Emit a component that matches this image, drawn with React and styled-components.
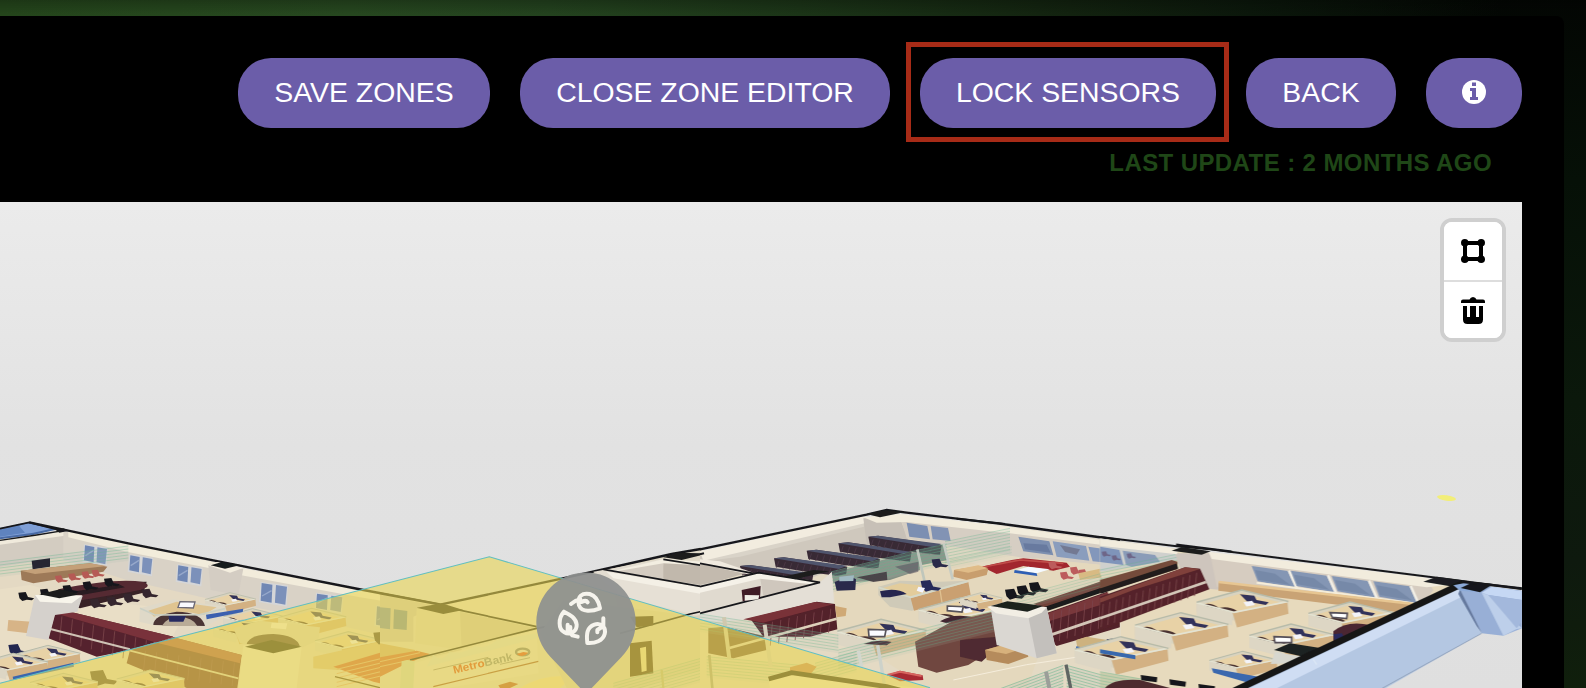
import React from 'react';
import styled, { createGlobalStyle } from 'styled-components';

const GlobalStyle = createGlobalStyle`
  * { box-sizing: border-box; }
  body { margin: 0; background: #050a05; font-family: "Liberation Sans", Arial, sans-serif; overflow: hidden; }
`;

const Page = styled.div`
  height: 688px;
  padding: 16px 22px 0 0;
  background:
    linear-gradient(180deg, rgba(0,0,0,.22), rgba(0,0,0,0) 14px),
    linear-gradient(90deg, #24451b 0, #26471f 350px, #23421e 550px, #1b3417 800px, #12220f 1070px, #0b170b 1250px, rgba(6,12,6,0) 1500px),
    linear-gradient(180deg, #030603 0, #061007 180px, #0b180b 400px, #0e190e 560px, #101f0c 688px);
`;

const Panel = styled.main`
  height: 672px;
  padding: 42px 42px 0 0;
  display: flex;
  flex-direction: column;
  background: #000;
  border-top-right-radius: 8px;
`;

const Actions = styled.nav`
  display: flex;
  justify-content: flex-end;
  gap: 30px;
`;

const Highlighted = styled.div`
  position: relative;
  &::after {
    content: "";
    position: absolute;
    inset: -16px -13px -14px -14px;
    border: 5px solid #a72b17;
    pointer-events: none;
  }
`;

const PillButton = styled.button`
  display: flex;
  align-items: center;
  justify-content: center;
  width: ${(p) => p.$width}px;
  height: 70px;
  padding: 0 0 2px;
  border: 0;
  border-radius: 33px;
  background: #6b5da9;
  color: #fff;
  font: 400 28.4px/32px "Liberation Sans", Arial, sans-serif;
  white-space: nowrap;
`;

const LastUpdate = styled.p`
  margin: 20px 30px 0 0;
  height: 54px;
  text-align: right;
  color: #1f4717;
  font-size: 24px;
  font-weight: 700;
  line-height: 30px;
  letter-spacing: 0.41px;
`;

const MapArea = styled.section`
  position: relative;
  height: 486px;
  overflow: hidden;
  background: linear-gradient(180deg, #ebebeb, #e2e2e2 50%, #dfdfdf);
`;

const Scene = styled.svg`
  display: block;
  width: 1522px;
  height: 486px;
`;

const MapTools = styled.div`
  position: absolute;
  top: 16px;
  right: 16px;
  width: 66px;
  border: 4px solid #cfcfcf;
  border-radius: 12px;
  overflow: hidden;
  background: #fff;
`;

const ToolButton = styled.button`
  display: flex;
  align-items: center;
  justify-content: center;
  width: 58px;
  height: ${(p) => (p.$divided ? 60 : 56)}px;
  padding: 0;
  border: 0;
  border-bottom: ${(p) => (p.$divided ? '2px solid #ddd' : '0')};
  background: #fff;
`;

const InfoIcon = () => (
  <svg width="24" height="24" viewBox="0 0 24 24">
    <circle cx="12" cy="12" r="12" fill="#fff" />
    <path d="M10 2.500H14V6H10ZM8 8H14V17H16V20H8V17H10V11H8Z" fill="#6b5da9" />
  </svg>
);

const DrawZoneIcon = () => (
  <svg width="24" height="24" viewBox="0 0 24 24">
    <rect x="4" y="4" width="16" height="16" rx="3" fill="none" stroke="#000" strokeWidth="4" />
    {[[3.8, 3.8], [20.2, 3.8], [3.8, 20.2], [20.2, 20.2]].map(([x, y]) => (
      <circle key={`${x}-${y}`} cx={x} cy={y} r="3.8" />
    ))}
  </svg>
);

const TrashIcon = () => (
  <svg width="24" height="27" viewBox="0 0 24 27">
    <path d="M0 6V4.500Q0 2.500 2 2.500H8.500Q9.500 0 12 0T15.500 2.500H22Q24 2.500 24 4.500V6Z" />
    <path d="M2 9H6V20H9V9H15V20H18V9H22V22.500Q22 27 17.500 27H6.500Q2 27 2 22.500Z" />
  </svg>
);

const Poly = ({ p, f, o, s, w }) => <polygon points={p} fill={f || 'none'} opacity={o} stroke={s} strokeWidth={w} />;
const Line = ({ p, c = '#17181a', w = 6, o }) => <polyline points={p} fill="none" stroke={c} strokeWidth={w} opacity={o} />;

/* A part of the plan drawn on a grid three times finer than the screen. */
const Sector = ({ x, y, children }) => <g transform={`translate(${x} ${y}) scale(.33333)`}>{children}</g>;

const Desk = ({ x, y, s = 1, front = '#d3b183' }) => (
  <g transform={`translate(${x} ${y}) scale(${s})`}>
    <Poly p="0,34 125,0 255,32 250,58 130,90 0,62" f="#d9d3bf" />
    <Poly p="22,38 125,9 232,34 130,66" f="#e8d2a6" />
    <path d="M20 40Q40 34 62 50Q90 44 112 58L92 64Q50 60 28 50Z" fill="#4a3330" />
    <path d="M120 12L160 16 166 28 200 34 192 42 140 32Z" fill="#33325a" />
    <path d="M130 34L154 30 162 42 138 46Z" fill="#f3f3f8" />
    <Poly p="0,38 100,62 98,98 0,72" f="#ddd6c4" />
    <Poly p="100,64 252,34 255,66 112,104" f={front} />
    <Line p="0,36 104,62 252,32" c="#e4e3d2" w={5} />
    <Line p="0,34 125,0 255,32" c="#b7bbaa" w={4} />
  </g>
);

const Blinds = ({ x1, y1, x2, y2, n, step = 9, o = 0.55 }) => (
  <g opacity={o}>
    <Poly p={`${x1},${y1} ${x2},${y2} ${x2},${y2 + n * step} ${x1},${y1 + n * step}`} f="#a9bdae" o={0.3} />
    {Array.from({ length: n }, (_, i) => (
      <Line key={i} p={`${x1},${y1 + i * step} ${x2},${y2 + i * step}`} c="#6bb592" w={2.2} />
    ))}
  </g>
);

const Seams = ({ from, to, h, n, c = '#7b444b' }) => (
  <g>
    {Array.from({ length: n }, (_, i) => {
      const t = (i + 0.5) / n;
      const x = from[0] + (to[0] - from[0]) * t;
      const y = from[1] + (to[1] - from[1]) * t;
      return <Line key={i} p={`${x},${y} ${x - 7},${y + h}`} c={c} w={2.5} />;
    })}
  </g>
);

const WindowPair = ({ x, y, w = 72, h = 52 }) => (
  <g>
    <Poly p={`${x},${y} ${x + w},${y + 10} ${x + w - 4},${y + h + 14} ${x - 5},${y + h}`} f="#d5d6d8" />
    <Poly p={`${x + 3},${y + 3} ${x + w * 0.43},${y + 8} ${x + w * 0.4},${y + h + 2} ${x},${y + h - 4}`} f="#7087b4" />
    <Poly p={`${x + w * 0.56},${y + 9} ${x + w - 3},${y + 14} ${x + w - 8},${y + h + 8} ${x + w * 0.52},${y + h + 2}`} f="#7c91ba" />
    <Line p={`${x + 4},${y + h - 18} ${x + w * 0.4},${y + h - 34}`} c="#97a9cb" w={4} />
  </g>
);

const Chair = ({ x, y, s = 1, c = '#19181d' }) => (
  <path transform={`translate(${x} ${y}) scale(${s})`} d="M0 3L26 0 34 18 56 22 48 29 30 27 14 32 4 22Z" fill={c} />
);

const WestWing = () => (
  <Sector x={0} y={500}>
    <Poly p="0,190 190,165 380,205 600,260 880,335 1300,430 1300,564 0,564" f="#e4d9c3" />
    <Poly p="0,85 88,66 175,88 100,105 0,122" f="#4a6ba5" />
    <Poly p="0,92 82,70 155,86 100,98 0,112" f="#7f9fd6" />
    <Poly p="0,84 55,75 75,98 0,110" f="#5f83bf" />
    <Poly p="0,120 190,95 205,145 190,172 0,200" f="#d3ccc1" />
    <Poly p="0,118 190,94 205,106 0,134" f="#f0eadc" />
    <Poly p="190,94 385,130 660,190 725,205 1100,272 1300,305 1300,440 880,345 600,290 380,240 190,180" f="#d9d2c6" />
    <Poly p="205,92 385,130 650,188 630,205 380,155 205,112" f="#f2ecdb" />
    <Poly p="720,203 1090,272 1300,310 1300,328 1080,292 720,225" f="#f2ecdb" />
    <Line p="0,86 88,67 175,90" w={5} />
    <Line p="0,121 110,105 190,92" w={4} />
    <Line p="88,67 385,130 670,187 1090,270 1320,313" w={7} />
    <Poly p="165,88 190,85 208,92 178,98" f="#17181a" />
    <WindowPair x={252} y={133} />
    <WindowPair x={388} y={163} />
    <WindowPair x={532} y={193} w={76} />
    <WindowPair x={782} y={246} w={82} h={60} />
    <WindowPair x={948} y={278} w={82} h={50} />
    <WindowPair x={1128} y={316} w={90} h={62} />
    <Poly p="625,196 650,186 730,206 715,285 632,270" f="#d4cdc3" />
    <Poly p="625,196 650,186 730,204 690,218" f="#f4eedf" />
    <Poly p="632,196 668,185 722,195 675,206" f="#191a1b" />
    <Blinds x1={0} y1={186} x2={385} y2={138} n={5} o={0.55} />
    <Poly p="95,182 150,175 150,200 98,208" f="#272631" />
    <Poly p="62,212 270,190 322,200 310,215 100,250 65,240" f="#9d7958" />
    <Poly p="62,212 270,190 320,198 105,222" f="#c4a079" />
    {[[165, 226], [205, 220], [245, 214], [275, 209]].map(([x, y]) => <Chair key={x} x={x} y={y} s={0.7} c="#b65a55" />)}
    <Poly p="0,268 90,255 260,300 560,330 515,415 0,550" f="#e9dec6" />
    <Poly p="180,268 340,246 440,245 430,278 240,325 190,310" f="#372027" />
    <path d="M175 268Q350 232 430 246Q470 262 390 276L235 302 175 282Z" fill="#542b33" />
    <Poly p="215,275 360,254 375,262 245,285" f="#2b1b20" />
    {[[55, 276], [120, 266], [188, 255], [248, 244], [312, 234]].map(([x, y]) => <Chair key={x} x={x} y={y} s={0.85} />)}
    {[[270, 296], [320, 290], [370, 280], [425, 266]].map(([x, y]) => <Chair key={x} x={x} y={y} s={0.9} c="#35272d" />)}
    <Poly p="25,360 95,365 85,400 22,392" f="#d7b487" />
    <Poly p="165,340 210,335 520,410 390,450 290,470 145,415" f="#55232d" />
    <Poly p="165,340 210,335 520,410 470,428" f="#79323a" />
    <Seams from={[170, 345]} to={[455, 425]} h={72} n={9} />
    <Line p="148,386 390,448" c="#cfc2b5" w={6} />
    <Poly p="105,285 248,288 232,335 165,345 145,420 78,408" f="#d5d1cc" />
    <Poly p="105,285 248,286 215,310 120,305" f="#f8f5eb" />
    <Poly p="118,283 180,268 240,283 178,295" f="#1b1e1d" />
    <Desk x={615} y={278} s={0.6} />
    <Desk x={670} y={326} s={0.7} />
    <Poly p="420,325 520,298 675,320 670,350 615,380 460,375 418,365" f="#dfd9c8" />
    <path d="M445 332L530 305 650 322 610 345Q535 325 462 350Z" fill="#dfc490" />
    <path d="M460 375Q460 345 530 335Q605 336 615 378Z" fill="#4b3435" />
    <path d="M485 378Q500 352 535 350Q580 352 592 378Z" fill="#b9ab97" />
    <Poly p="505,345 558,348 550,365 508,365" f="#272c61" />
    <Poly p="540,305 585,306 580,324 534,322" f="#fafaff" s="#6c6975" w={4} />
    <Line p="420,325 465,345 600,344 675,326" c="#cbd0c4" w={5} />
    <Poly p="618,344 730,326 728,336 620,358" f="#3a61af" />
    <Chair x={25} y={432} s={1.1} c="#24264f" />
    <Desk x={50} y={436} s={0.75} />
    <Desk x={-60} y={460} s={0.8} />
    <Poly p="38,530 220,488 222,500 40,540" f="#3b66ad" />
    {/* furniture inside the zone */}
    <Poly p="390,450 520,412 725,465 712,564 560,564 380,490" f="#6d3034" />
    <Poly p="470,428 520,412 725,465 720,490" f="#a8564c" />
    <Seams from={[420, 450]} to={[720, 490]} h={70} n={9} />
    <Line p="390,452 715,535" c="#d8cfb8" w={5} />
    <Desk x={640} y={360} s={0.7} />
    <Desk x={835} y={325} s={0.8} />
    <Poly p="700,385 780,362 960,382 955,420 880,455 720,430" f="#dbd4bd" />
    <path d="M740 432Q750 402 820 402Q890 405 900 440Z" fill="#54453c" />
    <Poly p="815,368 862,370 858,388 812,384" f="#f6efe2" />
    <Poly p="730,436 905,440 890,564 715,564" f="#ece5d0" />
    <Poly p="735,440 815,420 905,440 820,460" f="#2a2a1e" />
    <Desk x={945} y={395} s={0.8} />
    <Poly p="940,470 1200,412 1200,455 1015,510 940,505" f="#d9bd8c" />
    <Poly p="1000,500 1200,440 1200,564 1120,545" f="#d0643f" />
    {[0, 1, 2, 3, 4].map((i) => <Line key={i} p={`1010,${508 + i * 13} 1200,${462 + i * 13}`} c="#dfae85" w={3} />)}
    <Line p="1005,530 1200,578" c="#4d3a24" w={4} />
    <Chair x={270} y={510} s={1.5} c="#554737" />
    <Desk x={90} y={520} s={0.8} />
    <Desk x={350} y={510} s={0.8} />
    <Chair x={1120} y={395} s={1.2} c="#4f4234" />
  </Sector>
);

const CentralRooms = () => (
  <Sector x={380} y={500}>
    <Poly p="0,280 180,315 545,235 830,175 960,150 1200,200 1200,420 1100,564 0,564" f="#e2dac8" />
    <Poly p="0,284 170,318 100,350 100,425 0,425" f="#cdc6b8" />
    <Poly p="0,322 32,325 30,388 0,384" f="#7790ae" />
    <Poly p="42,328 82,333 80,390 40,386" f="#7289a4" />
    <Poly p="0,430 105,450 105,480 0,500" f="#cfac7a" />
    <Poly p="0,472 110,452 150,462 60,500 0,530" f="#d0643f" />
    <Line p="0,485 120,458" c="#dfae85" w={3} />
    <Line p="0,500 100,478" c="#dfae85" w={3} />
    <Poly p="110,326 245,335 245,450 105,430" f="#ddd4bf" />
    <Poly p="240,335 470,385 110,480 245,450" f="#cfc6b2" />
    <Poly p="185,310 545,237 700,270 720,350 470,382 250,330" f="#e8dfca" />
    <Line p="0,280 180,314 545,236 875,162 962,147" w={7} />
    <Line p="190,320 470,380" w={5} />
    <Poly p="110,323 185,310 250,330 190,342" f="#22221d" />
    <Poly p="100,490 470,390 475,520 200,564 60,564" f="#e6dfcf" />
    <Line p="90,480 470,385 720,340" w={5} />
    <path d="M160 464Q185 490 210 455Q245 465 285 438Q320 448 350 420L470 400 472 415 140 500Z" fill="#d7e0d7" opacity=".6" />
    <text transform="translate(222 521) rotate(-13)" fontFamily="Liberation Sans, Arial, sans-serif" fontSize="33" fontWeight="700" textLength="182" lengthAdjust="spacingAndGlyphs">
      <tspan fill="#d8451c">Metro</tspan><tspan fill="#858a85">Bank</tspan>
    </text>
    <ellipse cx="428" cy="456" rx="20" ry="10" fill="none" stroke="#787c7a" strokeWidth="7" />
    <path d="M410 462Q428 475 445 458L430 456Z" fill="#df4a20" />
    <Line p="160,510 325,472" c="#8a8275" w={2.5} />
    <Line p="160,560 475,484" c="#99502f" w={3.5} />
    <Line p="360,493 450,473" c="#98948a" w={3} />
    <Poly p="355,556 390,545 415,552 390,564 360,564" f="#b7512f" />
    <path d="M420 564Q490 520 580 530L540 564Z" fill="#f0dca9" />
    <Poly p="65,484 82,480 104,484 100,564 60,564" f="#cfd8bf" />

    <Poly p="640,215 700,205 860,175 985,190 1200,222 1200,290 950,345 720,290" f="#e3ddd1" />
    <Poly p="690,215 850,178 980,185 1105,215 965,258" f="#f3eee1" />
    <Poly p="715,213 850,190 860,235 835,238" f="#d4ccc1" />
    <Poly p="850,190 985,197 1090,222 965,256 850,238" f="#c1b8ac" />
    <Poly p="680,215 965,260 1140,222 1200,230 1200,285 950,345 720,290" f="#e6e0d5" />
    <Poly p="680,215 965,262 1140,224 1140,240 965,282 700,235" f="#f4f0e6" />
    <Line p="670,208 965,260 1130,222 850,178" w={5} />
    <Poly p="850,172 890,158 962,160 975,163 905,180" f="#1b1c1d" />

    <Poly p="550,300 950,348 1200,290 1200,415 1070,490 900,525 780,564 560,564 480,400" f="#dad2bc" />
    <Line p="720,400 930,342 1200,282" w={5} />
    <Poly p="750,350 820,348 820,376 770,382" f="#312820" />
    <Poly p="750,430 815,422 820,520 750,530" f="#453022" />
    <Poly p="780,444 798,440 800,512 785,516" f="#e8dba6" />
    <Blinds x1={700} y1={550} x2={980} y2={470} n={8} />
    <Line p="845,510 850,564" c="#b9b98f" w={7} />
  </Sector>
);

const EastWing = () => (
  <Sector x={700} y={490}>
    <Poly p="0,195 500,82 600,75 930,110 1260,155 1260,594 0,594" f="#e4dac4" />
    <Poly p="0,198 495,88 500,170 420,195 395,240 340,262 120,236 0,216" f="#cfc8bd" />
    <Poly p="12,196 490,92 492,110 120,200 12,214" f="#d9d3c8" />
    <Poly p="0,184 490,78 510,96 10,212" f="#f2ecdf" />
    <Poly p="490,85 600,85 625,150 500,165" f="#c7c0b7" />
    <Poly p="600,78 930,115 1260,165 1260,230 980,205 750,168 620,145" f="#d6cec3" />
    <Poly p="600,72 925,110 1260,158 1260,172 930,130 620,96 530,98 490,82" f="#f2ecdc" />
    <Line p="0,178 500,74 560,60 620,68 930,105 1260,150" w={7} />
    <Line p="0,193 12,190" w={6} />
    <Poly p="498,72 558,60 612,67 540,82" f="#1b1e1e" />
    <Line p="770,86 915,102" w={6} />
    <Poly p="620,98 682,108 690,148 628,140" f="#7c8fb2" />
    <Poly p="692,108 744,114 752,153 698,148" f="#8293b4" />
    <Poly p="955,140 1048,154 1060,196 970,184" f="#7b8eaf" />
    <Poly p="1058,154 1158,168 1168,212 1070,200" f="#8a9dbd" />
    <Poly p="1165,170 1260,184 1260,222 1178,214" f="#8397bb" />
    <Poly p="970,160 1040,164 1052,188 975,178" f="#677a9f" />
    <Poly p="1080,165 1140,178 1130,194 1095,186" f="#737992" />
    {[[120, 228], [222, 205], [320, 182], [415, 160], [505, 140]].map(([x, y]) => (
      <g key={x}>
        <Poly p={`${x},${y} ${x + 30},${y - 3} ${x + 220},${y + 25} ${x + 215},${y + 55} ${x + 105},${y + 42} ${x + 5},${y + 25}`} f="#392936" />
        <Poly p={`${x},${y} ${x + 28},${y - 3} ${x + 220},${y + 22} ${x + 195},${y + 32}`} f="#50546d" />
        <Seams from={[x + 5, y + 7]} to={[x + 200, y + 34]} h={20} n={10} c="#4c3a47" />
      </g>
    ))}
    <Poly p="400,260 600,220 770,205 860,230 1010,205 1260,230 1260,400 1030,460 980,594 680,594 410,420" f="#e4d8bd" />
    <Blinds x1={735} y1={155} x2={930} y2={115} n={8} o={0.5} />
    <Blinds x1={750} y1={210} x2={935} y2={170} n={3} o={0.3} />
    <Poly p="845,230 935,210 970,205 1100,218 1110,230 1060,242 970,228 890,252" f="#a2282f" />
    <Line p="850,231 960,210 1090,220" c="#c04c4a" w={5} />
    <Poly p="950,240 985,230 1050,238 1010,250" f="#f5faff" />
    <Poly p="944,240 1010,250 1012,258 942,248" f="#2e5fb5" />
    <Poly p="762,240 835,228 865,236 860,255 800,270 760,260" f="#c89e6e" />
    <Poly p="762,240 835,226 864,234 805,248" f="#e0bc88" />
    {[[1080, 245], [1110, 230], [1135, 238], [1045, 214]].map(([x, y]) => <Chair key={x} x={x} y={y} s={0.75} c="#bc5c5c" />)}
    <Poly p="395,248 655,182 660,240 570,270 400,280" f="#435f5b" o={0.6} />
    <Poly p="655,180 735,162 745,210 665,225" f="#435c59" o={0.6} />
    <Blinds x1={392} y1={246} x2={655} y2={180} n={7} o={0.6} />
    <Blinds x1={655} y1={180} x2={740} y2={162} n={7} o={0.6} />
    <Poly p="470,262 560,245 562,270 520,276" f="#3b303a" o={0.8} />
    <Poly p="585,230 655,215 655,245 630,252" f="#5c5460" o={0.6} />
    <Line p="652,178 675,280" c="#bfc6bb" w={8} />
    <Line p="731,160 758,268" c="#c5cbc2" w={8} />
    <Poly p="404,276 450,258 468,268 466,300 410,302" f="#292c4c" />
    <Poly p="418,260 462,256 460,273 418,274" f="#9fb8c1" />
    <Chair x={695} y={206} s={0.9} c="#2c294a" />
    <Poly p="535,290 600,272 720,275 800,272 808,315 635,362 570,350 535,315" f="#cfcab8" />
    <Poly p="545,295 600,280 715,292 630,322" f="#e3cc9b" />
    <Poly p="632,325 805,276 812,314 642,362" f="#caa071" />
    <Line p="720,300 726,338" c="#dfc090" w={4} />
    <Line p="535,292 632,322 803,274" c="#d5d8c8" w={6} />
    <path d="M540 304Q590 292 620 312L570 322 545 322Z" fill="#27264f" />
    <Chair x={662} y={270} s={1.1} c="#26295a" />
    <Poly p="655,290 675,294 668,308 650,302" f="#f3f4ff" />
    <Desk x={656} y={324} s={1} />
    <Desk x={780} y={308} s={0.5} />
    <Desk x={412} y={388} s={1.05} />
    <Poly p="742,348 790,350 786,366 742,362" f="#fbfbff" s="#57535a" w={5} />
    <Poly p="505,418 558,420 554,440 507,440" f="#fbfbff" s="#57535a" w={5} />
    <path d="M720 394Q760 368 820 382L740 400Z" fill="#422831" />
    <path d="M490 462Q530 446 575 456L560 466Z" fill="#422831" />
    <Poly p="645,455 755,395 880,365 900,465 805,525 710,548 655,530" f="#70463f" />
    <Poly p="780,450 892,440 900,465 845,515 780,500" f="#4f2c30" />
    <Blinds x1={415} y1={480} x2={885} y2={362} n={7} o={0.5} />
    <Line p="880,358 900,465" c="#a9c2b3" w={5} />
    <Poly p="855,480 920,462 980,472 985,500 925,522 860,510" f="#b58b5c" />
    <Poly p="855,480 920,462 980,472 918,492" f="#d7b17c" />
    {[[915, 296], [950, 286], [987, 276]].map(([x, y]) => <Chair key={x} x={x} y={y} s={1.05} />)}
    <Poly p="1135,250 1240,228 1260,234 1260,256 1140,270" f="#d8ba83" />
    <Poly p="1000,342 1260,255 1260,278 1040,355" f="#714239" />
    <Blinds x1={950} y1={320} x2={1260} y2={235} n={5} o={0.4} />
    <Line p="1035,358 1260,282" c="#1d1a1b" w={14} />
    <Poly p="1038,370 1260,292 1260,412 1070,468 1040,440" f="#532229" />
    <Poly p="1038,372 1260,294 1260,326 1040,396" f="#79373b" />
    <Seams from={[1050, 372]} to={[1260, 306]} h={92} n={9} />
    <Line p="1055,434 1260,364" c="#d3c5b7" w={9} />
    <Poly p="872,355 1040,352 1070,490 1010,505 890,465" f="#dad7d2" />
    <Poly p="982,365 1040,352 1070,490 1010,505" f="#c3c0bc" />
    <Poly p="862,350 920,336 1040,352 1025,368 985,385 888,370" f="#f2eee4" />
    <Poly p="872,348 922,334 1030,348 982,365" f="#1c201f" />
    <Poly p="1128,450 1160,440 1260,456 1260,520 1135,490" f="#cdb27f" />
    <Line p="1128,474 1260,500" c="#416db0" w={11} />
    <Chair x={1220} y={445} s={1} c="#222653" />
    <Poly p="0,220 145,247 0,290" f="#c3baae" />
    <Poly p="0,208 60,214 160,248 140,252 0,222" f="#f0eadf" />
    <Poly p="0,285 165,250 370,275 395,246 402,340 0,370" f="#e0dacf" />
    <Poly p="180,262 345,278 190,320 185,290" f="#cfc7bd" />
    <Poly p="0,290 180,250 345,275 335,283 180,266 0,308" f="#f5f1e8" />
    <Poly p="0,370 360,277 395,246 402,340 190,385 0,400" f="#e4dfd6" />
    <Line p="0,290 160,252 175,248 360,277 0,370" w={5} />
    <Line p="0,220 160,250" w={5} />
    <Poly p="258,258 340,240 388,244 285,268" f="#1b1e1e" />
    <Poly p="125,300 182,288 180,326 128,334" f="#3f1d27" />
    <Poly p="134,315 178,316 175,328 134,332" f="#f0ede5" />
    <Poly p="150,385 350,335 405,342 412,418 330,440 190,440" f="#522029" />
    <Poly p="130,388 345,336 400,343 190,398" f="#793238" />
    <Seams from={[205, 398]} to={[405, 353]} h={72} n={8} />
    <Line p="80,476 410,386" c="#ded1bb" w={8} />
    <Poly p="405,348 440,355 437,378 410,382" f="#cfa976" />
    <Poly p="25,415 75,410 200,440 200,480 100,505 25,490" f="#71523f" />
    <Line p="80,476 200,443" c="#ded1bb" w={8} />
    <Blinds x1={0} y1={372} x2={415} y2={436} n={6} o={0.5} />
    <Blinds x1={20} y1={500} x2={345} y2={530} n={7} o={0.5} />
    <Blinds x1={345} y1={520} x2={470} y2={484} n={7} o={0.5} />
    <Line p="72,382 88,506" c="#cfc8ae" w={12} />
    <Line p="194,404 212,530" c="#d5cfbd" w={12} />
    <Line p="475,482 486,535" c="#d3d7ce" w={10} />
    <Line p="533,466 555,594" c="#cdd2ca" w={10} />
    <Line p="28,495 37,594" c="#a5a28b" w={8} />
    <Poly p="560,555 600,542 668,556 670,570 600,574" f="#a82b32" />
    <Line p="562,555 600,545 665,558" c="#d7655f" w={6} />
    <Poly p="270,532 320,518 350,530 325,560 270,550" f="#c5865e" />
    <Poly p="205,565 275,546 650,594 210,594" f="#f0e6c7" />
    <Line p="206,567 275,548 560,590 600,600" w={14} c="#2b251c" />
    <Blinds x1={890} y1={600} x2={1090} y2={526} n={9} o={0.75} />
    <Blinds x1={1100} y1={526} x2={1260} y2={570} n={8} o={0.75} />
    <Line p="1038,545 1048,594" c="#9b9e99" w={12} />
    <Line p="1098,524 1112,594" c="#606563" w={10} />
    <Line p="760,570 980,524 1140,500" c="#f5eddc" w={3} />
  </Sector>
);

const SouthEast = () => (
  <Sector x={1100} y={490}>
    <Poly p="0,145 215,175 1060,280 1050,300 400,610 60,610 60,400 0,250" f="#e7dabd" />
    <Poly p="0,145 220,178 235,210 0,245" f="#cfd0cd" />
    <Poly p="0,170 58,180 70,225 0,216" f="#7f94ba" />
    <Poly p="68,182 165,195 180,215 95,230 78,225" f="#8a9cb8" />
    {[[5, 184], [35, 196], [80, 190]].map(([x, y]) => <Chair key={x} x={x} y={y} s={0.5} c="#6e6688" />)}
    <Blinds x1={0} y1={240} x2={235} y2={192} n={5} o={0.5} />
    <Poly p="225,190 340,190 365,300 310,295 240,235" f="#cec5bd" />
    <Poly p="330,190 980,270 1000,300 965,345 350,290" f="#d6ccc0" />
    <Poly p="0,147 210,173 235,184 230,193 0,167" f="#f2ecdd" />
    <Poly p="325,185 970,262 1055,284 980,292 335,207" f="#f2ecdd" />
    <Line p="0,141 230,169 330,178 1010,263 1266,296" w={6} />
    <Line p="228,164 395,185" w={7} />
    <Poly p="215,182 245,171 332,184 305,194" f="#1b1e1e" />
    {[[455, 228], [572, 242], [695, 258], [820, 274]].map(([x, y]) => (
      <g key={x}>
        <Poly p={`${x},${y} ${x + 108},${y + 15} ${x + 132},${y + 66} ${x + 18},${y + 46}`} f="#8496b4" />
        <Poly p={`${x + 10},${y + 12} ${x + 70},${y + 23} ${x + 116},${y + 57} ${x + 20},${y + 41}`} f="#6c7f9f" o={0.55} />
        <Line p={`${x + 112},${y + 14} ${x + 136},${y + 68}`} c="#f1eee5" w={8} />
      </g>
    ))}
    <Line p="470,278 940,340" c="#f5edd9" w={6} />
    <Poly p="0,270 215,210 232,215 232,238 0,310" f="#754c3a" />
    <Line p="0,304 232,228" c="#221d1d" w={16} />
    <Poly p="0,320 255,232 300,236 328,298 120,375 0,420" f="#55242a" />
    <Poly p="0,325 255,232 300,237 100,300 0,338" f="#80413b" />
    <Seams from={[0, 345]} to={[300, 245]} h={70} n={15} />
    <Line p="0,385 318,276" c="#d3c6b8" w={8} />
    <Poly p="356,276 930,338 920,370 555,325 355,302" f="#c9a375" />
    <Line p="356,276 940,342" c="#e7c692" w={8} />
    <Desk x={290} y={300} s={1.08} />
    <Desk x={105} y={368} s={1.1} />
    <Desk x={-75} y={440} s={1.1} />
    <Poly p="0,478 106,496 106,508 0,490" f="#3768ad" />
    <Desk x={625} y={336} s={1} />
    <Desk x={448} y={402} s={1} />
    <Desk x={328} y={484} s={0.8} />
    <Poly p="335,535 500,565 450,580 340,548" f="#3b67ae" />
    <path d="M700 424Q740 390 810 405L790 430 700 455Z" fill="#4b2732" />
    <Poly p="690,368 742,370 740,386 697,382" f="#fff" s="#565059" w={5} />
    <Poly p="522,440 575,442 575,458 525,458" f="#fff" s="#565059" w={5} />
    <Chair x={700} y={430} s={1} c="#292c5e" />
    <Poly p="525,486 610,500 580,520 512,522" f="#d7d7cf" />
    <Poly p="522,480 570,460 665,475 645,490 610,500" f="#1c2020" />
    <Poly p="970,275 1010,260 1110,274 1060,290" f="#1c1f20" />
    <Poly p="0,545 120,565 120,594 0,594" f="#cfd0ac" />
    <Blinds x1={0} y1={545} x2={150} y2={572} n={6} />
    <path d="M15 594Q40 565 120 570L210 594Z" fill="#4d2a2e" />
    {[[122, 555], [208, 568], [295, 582]].map(([x, y]) => (
      <Poly key={x} p={`${x},${y} ${x + 50},${y + 7} ${x + 48},${y + 22} ${x + 2},${y + 16}`} f="#19191b" />
    ))}
    <Poly p="430,600 1080,286 1145,430 830,610" f="#b4c7e2" />
    <Poly p="450,594 1075,298 1090,318 500,610" f="#cfddf3" />
    <Poly p="1080,298 1175,290 1266,302 1266,415 1210,437 1145,430" f="#98afd6" />
    <Poly p="1080,298 1145,428 1130,408 1075,312" f="#65799e" />
    <Poly p="1145,308 1175,290 1266,304 1266,330 1165,315" f="#c6d8f4" />
    <Poly p="1145,308 1165,315 1266,415 1250,417 1210,437" f="#bdcfea" />
    <Poly p="1165,315 1266,330 1266,395 1250,415" f="#a3b8dc" />
    <Line p="830,604 1145,430" c="#93a4bd" w={3} />
    <Line p="400,604 1090,280" w={20} c="#161718" />
    <Poly p="1060,286 1110,276 1180,286 1130,306 1080,302" f="#8dabd9" />
    <Poly p="1082,294 1120,276 1180,282 1140,307" f="#16191b" />
    <Line p="1090,276 1200,288 1266,296" w={8} />
    <Line p="640,508 650,524" c="#dce7f6" w={4} />
  </Sector>
);

const FloorPlan = () => (
  <Scene viewBox="0 202 1522 486">
    <defs>
      <filter id="soft" filterUnits="userSpaceOnUse" x="-10" y="480" width="1542" height="220">
        <feGaussianBlur stdDeviation="0.55" />
      </filter>
    </defs>
    <g filter="url(#soft)">
      <WestWing />
      <CentralRooms />
      <EastWing />
      <SouthEast />
    </g>
    <polygon points="489.300,556.700 0,683.300 0,700 970,700" fill="#ead551" opacity=".6" />
    <polyline points="0,683.300 489.300,556.700 930,687.700" fill="none" stroke="#62bfc0" strokeWidth="1.100" />
    <ellipse cx="1446.500" cy="498" rx="9.500" ry="2.700" transform="rotate(7 1446.500 498)" fill="#f2ee79" />
    <path d="M550.500 657A49.700 49.700 0 1 1 621.500 657L586 694Z" fill="#8e918f" opacity=".94" />
    <Sector x={510} y={560}>
      <g fill="none" stroke="#f6f4ed" strokeWidth="12" strokeLinecap="round" strokeLinejoin="round">
        <path d="M183 132Q197 120 211 118M207 136C199 108 218 98 239 102C258 107 266 123 270 145C247 154 215 158 207 136ZM215 126Q228 119 233 127" />
        <path d="M162 155C144 175 145 207 162 216C181 228 201 214 200 194C198 174 180 164 162 155ZM173 194V210L187 226L203 230M181 210V201" />
        <path d="M280 175V198M232 249C229 223 230 202 253 194C273 187 289 203 284 222C279 242 255 251 232 249ZM280 198L262 210V217" />
      </g>
    </Sector>
  </Scene>
);

export default function App() {
  return (
    <>
      <GlobalStyle />
      <Page>
        <Panel>
          <Actions>
            <PillButton $width={252}>SAVE ZONES</PillButton>
            <PillButton $width={370}>CLOSE ZONE EDITOR</PillButton>
            <Highlighted>
              <PillButton $width={296}>LOCK SENSORS</PillButton>
            </Highlighted>
            <PillButton $width={150}>BACK</PillButton>
            <PillButton $width={96} aria-label="Information">
              <InfoIcon />
            </PillButton>
          </Actions>
          <LastUpdate>LAST UPDATE : 2 MONTHS AGO</LastUpdate>
          <MapArea>
            <FloorPlan />
            <MapTools>
              <ToolButton $divided aria-label="Draw zone"><DrawZoneIcon /></ToolButton>
              <ToolButton aria-label="Delete zone"><TrashIcon /></ToolButton>
            </MapTools>
          </MapArea>
        </Panel>
      </Page>
    </>
  );
}
